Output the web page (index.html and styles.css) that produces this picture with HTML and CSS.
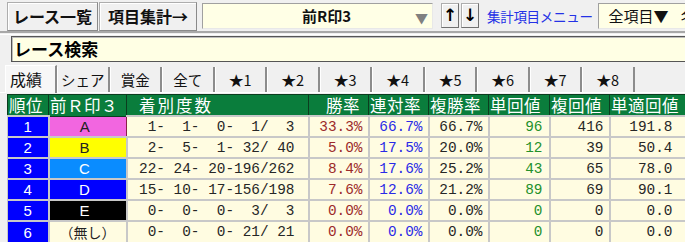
FILE: index.html
```html
<!DOCTYPE html>
<html lang="ja">
<head>
    <meta charset="UTF-8">
    <title>レース一覧 項目集計</title>
    <link rel="stylesheet" href="styles.css">
</head>
<body>
    <div class="toolbar">
        <button class="tb-btn btn-list">レース一覧</button>
        <button class="tb-btn btn-sum">項目集計→</button>
        <div class="select">
            <span class="select-text">前R印3</span>
            <span class="select-arrow">▼</span>
        </div>
        <button class="arrow-btn arrow-up">↑</button>
        <button class="arrow-btn">↓</button>
        <span class="menu-link">集計項目メニュー</span>
        <div class="all-box">全項目▼<span class="all-next">名</span></div>
    </div>
    <div class="divider"></div>

    <div class="search">レース検索</div>

    <div class="tabs">
        <div class="tab active">成績</div>
        <div class="tab">シェア</div>
        <div class="tab">賞金</div>
        <div class="tab">全て</div>
        <div class="tab">★1</div>
        <div class="tab">★2</div>
        <div class="tab">★3</div>
        <div class="tab">★4</div>
        <div class="tab">★5</div>
        <div class="tab">★6</div>
        <div class="tab">★7</div>
        <div class="tab">★8</div>
    </div>

    <table class="stats">
        <colgroup>
            <col style="width:41px"><col style="width:78px"><col style="width:182px">
            <col style="width:60px"><col style="width:60px"><col style="width:60px">
            <col style="width:61px"><col style="width:60px"><col style="width:76px">
        </colgroup>
        <thead>
            <tr>
                <th class="h-left">順位</th>
                <th class="h-left">前Ｒ印３</th>
                <th class="h-left h-wide">着別度数</th>
                <th class="h-right">勝率</th>
                <th>連対率</th>
                <th>複勝率</th>
                <th>単回値</th>
                <th>複回値</th>
                <th>単適回値</th>
            </tr>
        </thead>
        <tbody>
            <tr>
                <td class="rank">1</td>
                <td class="mark mark-a">A</td>
                <td class="num count">1-&nbsp;&nbsp;1-&nbsp;&nbsp;0-&nbsp;&nbsp;1/&nbsp;&nbsp;3</td>
                <td class="num win">33.3%</td>
                <td class="num place">66.7%</td>
                <td class="num">66.7%</td>
                <td class="num ret">96</td>
                <td class="num">416</td>
                <td class="num last">191.8</td>
            </tr>
            <tr>
                <td class="rank">2</td>
                <td class="mark mark-b">B</td>
                <td class="num count">2-&nbsp;&nbsp;5-&nbsp;&nbsp;1-&nbsp;32/&nbsp;40</td>
                <td class="num win">5.0%</td>
                <td class="num place">17.5%</td>
                <td class="num">20.0%</td>
                <td class="num ret">12</td>
                <td class="num">39</td>
                <td class="num last">50.4</td>
            </tr>
            <tr>
                <td class="rank">3</td>
                <td class="mark mark-c">C</td>
                <td class="num count">22-&nbsp;24-&nbsp;20-196/262</td>
                <td class="num win">8.4%</td>
                <td class="num place">17.6%</td>
                <td class="num">25.2%</td>
                <td class="num ret">43</td>
                <td class="num">65</td>
                <td class="num last">78.0</td>
            </tr>
            <tr>
                <td class="rank">4</td>
                <td class="mark mark-d">D</td>
                <td class="num count">15-&nbsp;10-&nbsp;17-156/198</td>
                <td class="num win">7.6%</td>
                <td class="num place">12.6%</td>
                <td class="num">21.2%</td>
                <td class="num ret">89</td>
                <td class="num">69</td>
                <td class="num last">90.1</td>
            </tr>
            <tr>
                <td class="rank">5</td>
                <td class="mark mark-e">E</td>
                <td class="num count">0-&nbsp;&nbsp;0-&nbsp;&nbsp;0-&nbsp;&nbsp;3/&nbsp;&nbsp;3</td>
                <td class="num win">0.0%</td>
                <td class="num place">0.0%</td>
                <td class="num">0.0%</td>
                <td class="num ret">0</td>
                <td class="num">0</td>
                <td class="num last">0.0</td>
            </tr>
            <tr>
                <td class="rank">6</td>
                <td class="mark mark-none">（無し）</td>
                <td class="num count">0-&nbsp;&nbsp;0-&nbsp;&nbsp;0-&nbsp;21/&nbsp;21</td>
                <td class="num win">0.0%</td>
                <td class="num place">0.0%</td>
                <td class="num">0.0%</td>
                <td class="num ret">0</td>
                <td class="num">0</td>
                <td class="num last">0.0</td>
            </tr>
        </tbody>
    </table>
</body>
</html>
```

FILE: styles.css
```css
* {
    box-sizing: border-box;
    margin: 0;
    padding: 0;
}

body {
    width: 685px;
    height: 242px;
    overflow: hidden;
    background: #f0f0f0;
    font-family: "Noto Sans CJK JP", sans-serif;
    color: #111;
}

/* top toolbar */
.toolbar {
    display: flex;
    align-items: center;
    height: 31px;
    padding-left: 7px;
    white-space: nowrap;
}

.toolbar > * {
    flex-shrink: 0;
}

.tb-btn {
    height: 29px;
    margin-top: 1px;
    background: #f0f0f0;
    border: 1px solid #adadad;
    border-right-color: #8a8a8a;
    border-bottom-color: #8a8a8a;
    box-shadow: inset 1px 1px 0 #fff;
    font-family: "Noto Sans CJK JP", sans-serif;
    font-size: 16px;
    font-weight: bold;
    color: #111;
    line-height: 1;
}

.btn-list {
    width: 91px;
}

.btn-sum {
    width: 98px;
    margin-left: 1px;
}

.select {
    position: relative;
    width: 231px;
    height: 26px;
    margin-left: 5px;
    background: #ffffe6;
    border: 1px solid #a0a0a0;
    border-right-color: #e8e8e8;
    border-bottom-color: #e8e8e8;
    display: flex;
    align-items: center;
    justify-content: center;
}

.select-text {
    font-size: 15px;
    font-weight: bold;
    padding-left: 18px;
}

.select-arrow {
    position: absolute;
    right: 4px;
    top: 4px;
    font-size: 13px;
    color: #808080;
}

.arrow-btn {
    width: 18px;
    height: 25px;
    margin-left: 2px;
    background: #f0f0f0;
    border: 1px solid #adadad;
    border-right-color: #707070;
    border-bottom-color: #707070;
    box-shadow: inset 1px 1px 0 #fff;
    font-family: "DejaVu Sans", sans-serif;
    font-size: 17px;
    font-weight: bold;
    line-height: 1;
    color: #000;
}

.arrow-up {
    margin-left: 8px;
}

.menu-link {
    margin-left: 8px;
    font-size: 13.5px;
    color: #2431e6;
    letter-spacing: -0.3px;
}

.toolbar > .all-box {
    flex: 1 1 0;
    min-width: 0;
    overflow: hidden;
    height: 26px;
    margin-left: 5px;
    background: #ffffe6;
    border: 1px solid #a0a0a0;
    border-right: none;
    border-bottom-color: #e8e8e8;
    display: flex;
    align-items: center;
    padding-left: 10px;
    font-size: 15px;
}

.all-next {
    margin-left: 12px;
}

.divider {
    height: 4px;
    border-top: 2px solid #a8a8a8;
    border-bottom: 1px solid #ffffff;
}

/* search box */
.search {
    height: 26px;
    margin: 1px 0 0 11px;
    background: #ffffe4;
    border: 1px solid #555;
    border-right: none;
    box-shadow: inset 1px 1px 0 #bdbdbd;
    padding-left: 2px;
    font-size: 17px;
    font-weight: bold;
    line-height: 24px;
    color: #000;
}

/* tabs */
.tabs {
    display: flex;
    height: 28px;
    margin-top: 3px;
    padding-left: 5px;
    border-bottom: 1px solid #fff;
}

.tab {
    width: 52.5px;
    height: 25px;
    margin-top: 2px;
    border-left: 1px solid #fff;
    border-right: 2px solid #8c8c8c;
    font-size: 14.5px;
    line-height: 25px;
    text-align: center;
    color: #111;
}

.tab.active {
    width: 52px;
    height: 28px;
    margin-top: 0;
    background: #f7f7f7;
    border-top: 1px solid #fff;
    font-size: 16px;
    line-height: 26px;
    text-align: left;
    padding-left: 4px;
}

/* results table */
.stats {
    margin: 1px 0 0 7px;
    border-collapse: collapse;
    table-layout: fixed;
    width: 678px;
}

.stats th {
    height: 21px;
    background: #0a7d3c;
    color: #fff;
    font-weight: normal;
    font-size: 16.5px;
    line-height: 20px;
    text-align: left;
    padding: 0 0 0 1px;
    border: 1px solid #0b3d1f;
    white-space: nowrap;
    overflow: hidden;
    letter-spacing: 0.5px;
}

.stats th.h-wide {
    padding-left: 12px;
    letter-spacing: 2px;
}

.stats th.h-right {
    text-align: right;
    padding-right: 8px;
}

.stats td {
    height: 21px;
    background: #fffce1;
    border: 1px solid #c8c8c8;
    border-width: 2px 2px 0 1px;
    white-space: nowrap;
    overflow: hidden;
}

.num {
    font-family: "Liberation Mono", monospace;
    font-size: 14.4px;
    text-align: right;
    padding-right: 5px;
    color: #262626;
}

.count {
    padding-right: 13px;
}

.win {
    color: #9c2a2a;
}

.place {
    color: #2a2ae6;
}

.ret {
    color: #23902b;
    padding-right: 6px;
}

.last {
    padding-right: 12px;
}

td.rank {
    background: #0000ff;
    color: #fff;
    font-family: "Liberation Sans", sans-serif;
    font-size: 15px;
    text-align: center;
}

td.mark {
    font-family: "Liberation Sans", sans-serif;
    font-size: 15px;
    text-align: center;
    padding-right: 6px;
}

td.mark-a {
    background: #f266e0;
    color: #222;
    border: 1px solid #8a1f48;
}

td.mark-b {
    background: #ffff00;
    color: #222;
}

td.mark-c {
    background: #0a8cff;
    color: #fff;
}

td.mark-d {
    background: #0000ff;
    color: #fff;
}

td.mark-e {
    background: #000;
    color: #fff;
}

td.mark-none {
    font-family: "Noto Sans CJK JP", sans-serif;
    font-size: 14px;
    color: #222;
    padding-right: 0;
}
```
